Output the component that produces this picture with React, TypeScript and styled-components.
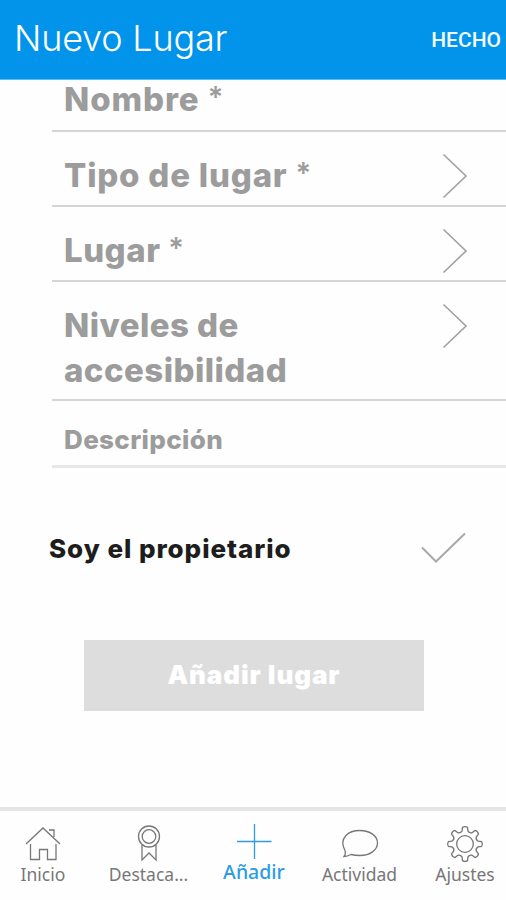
import React from "react";
import styled, { createGlobalStyle } from "styled-components";

const GlobalStyle = createGlobalStyle`
  * { box-sizing: border-box; }
  body { margin: 0; background: #fefefe; font-family: Inter, "Liberation Sans", sans-serif; }
`;

const Screen = styled.div`
  width: 506px;
  height: 900px;
  overflow: hidden;
  display: flex;
  flex-direction: column;
  background: #fefefe;
`;

const Header = styled.header`
  height: 80px;
  flex: none;
  display: flex;
  align-items: center;
  justify-content: space-between;
  padding: 0 5px 4px 14px;
  background: #0294eb;
  border-bottom: 1px solid #5bbaf2;
  color: #fff;
`;

const Title = styled.h1`
  margin: 0;
  font: 350 36px/44px Inter, sans-serif;
  letter-spacing: -0.2px;
`;

const Done = styled.button`
  border: 0;
  padding: 5px 0 0;
  background: none;
  color: #f3faff;
  font: 500 21px/26px Roboto, sans-serif;
`;

const Form = styled.main`
  flex: 1;
  display: flex;
  flex-direction: column;
`;

const Row = styled.div<{ $height: number; $top: number; $soft?: boolean }>`
  height: ${(p) => p.$height}px;
  flex: none;
  margin-left: 52px;
  padding: ${(p) => p.$top}px 38px 0 12px;
  display: flex;
  align-items: flex-start;
  justify-content: space-between;
  border-bottom: ${(p) => (p.$soft ? "3px solid #e7e7e7" : "2px solid #d5d5d5")};
`;

const Label = styled.span<{ $small?: boolean; $spacing: number; $lift?: number }>`
  width: 270px;
  margin-top: ${(p) => -(p.$lift ?? 0)}px;
  white-space: nowrap;
  color: #9c9c9c;
  font-weight: 800;
  font-size: ${(p) => (p.$small ? 26 : 33)}px;
  line-height: 45px;
  letter-spacing: ${(p) => p.$spacing}px;
`;

const Star = styled.span`
  font-weight: 600;
  font-size: 29px;
  line-height: 1;
  vertical-align: 4px;
`;

const Chevron = styled.svg`
  width: 26px;
  height: 46px;
  flex: none;
  fill: none;
  stroke: #a0a0a0;
  stroke-width: 1.6;
`;

const OwnerRow = styled.div`
  height: 50px;
  margin-top: 56px;
  padding: 0 38px 0 49px;
  display: flex;
  align-items: center;
  justify-content: space-between;
`;

const OwnerLabel = styled.span`
  color: #1d1d1d;
  font-weight: 800;
  font-size: 26px;
  line-height: 34px;
  white-space: nowrap;
  letter-spacing: 0.95px;
`;

const Check = styled.svg`
  width: 48px;
  height: 36px;
  fill: none;
  stroke: #a9a9a9;
  stroke-width: 2;
`;

const Submit = styled.button`
  width: 340px;
  height: 71px;
  margin: 66px 0 0 84px;
  padding: 0 0 1px;
  border: 0;
  background: #ddd;
  color: #fff;
  font: 900 26px/34px Inter, sans-serif;
  letter-spacing: 0.9px;
`;

const TabBar = styled.nav`
  height: 93px;
  flex: none;
  display: grid;
  grid-template-columns: 86px 125px 86px 125px 86px;
  border-top: 4px solid #e5e5e5;
`;

const Tab = styled.a<{ $active?: boolean }>`
  display: flex;
  flex-direction: column;
  align-items: center;
  padding-top: ${(p) => (p.$active ? 12 : 14)}px;
  color: ${(p) => (p.$active ? "#2c9ce4" : "#777")};
  font: ${(p) => (p.$active ? 500 : 400)} ${(p) => (p.$active ? 19.5 : 17.5)}px/24px "Noto Sans", sans-serif;
  white-space: nowrap;
`;

const Icon = styled.svg`
  width: 40px;
  height: 40px;
  margin-bottom: -3px;
  flex: none;
  fill: none;
  stroke: currentColor;
  stroke-width: 1.3;
`;

const Arrow = () => (
  <Chevron viewBox="0 0 26 46">
    <path d="M1.5 1.5 24 23 1.5 44.5" />
  </Chevron>
);

const CENTER_X = 20;
const CENTER_Y = 19;
const point = (r: number, a: number) =>
  `${(CENTER_X + r * Math.sin(a)).toFixed(2)} ${(CENTER_Y - r * Math.cos(a)).toFixed(2)}`;
const gearPath =
  Array.from({ length: 8 }, (_, i) => {
    const a = (i * Math.PI) / 4;
    return `${i ? "L" : "M"}${point(13.4, a - 0.22)}L${point(16.8, a - 0.15)}Q${point(18.2, a)} ${point(16.8, a + 0.15)}L${point(13.4, a + 0.22)}Q${point(11.4, a + Math.PI / 8)} ${point(13.4, a + Math.PI / 4 - 0.22)}`;
  }).join("") + "Z";

export default function App() {
  return (
    <>
      <GlobalStyle />
      <Screen>
        <Header>
          <Title>Nuevo Lugar</Title>
          <Done>HECHO</Done>
        </Header>
        <Form>
          <Row $height={52} $top={0}>
            <Label $spacing={0.9} $lift={3}>Nombre <Star>*</Star></Label>
          </Row>
          <Row $height={75} $top={21}>
            <Label $spacing={0.8}>Tipo de lugar <Star>*</Star></Label>
            <Arrow />
          </Row>
          <Row $height={75} $top={21}>
            <Label $spacing={0.5}>Lugar <Star>*</Star></Label>
            <Arrow />
          </Row>
          <Row $height={119} $top={21}>
            <Label $spacing={0.45}>Niveles de<br />accesibilidad</Label>
            <Arrow />
          </Row>
          <Row $height={67} $top={17} $soft>
            <Label $small $spacing={0.35} $lift={1}>Descripción</Label>
          </Row>
          <OwnerRow>
            <OwnerLabel>Soy el propietario</OwnerLabel>
            <Check viewBox="0 0 48 36">
              <path d="M2 16.5 16 30.5 45 2.5" />
            </Check>
          </OwnerRow>
          <Submit>Añadir lugar</Submit>
        </Form>
        <TabBar>
          <Tab>
            <Icon viewBox="0 0 40 40">
              <path d="M3 19 20 3 37 19M7.500 19V34.500H16.500V24.500H24.500V34.500H33V19M26 5H31V12" />
            </Icon>
            Inicio
          </Tab>
          <Tab>
            <Icon viewBox="0 0 40 40">
              <circle cx="20" cy="11.5" r="10.5" />
              <circle cx="20" cy="11.5" r="6.8" />
              <path d="M13 20V35L20 28 27 35V20" />
            </Icon>
            Destaca...
          </Tab>
          <Tab $active>
            <Icon viewBox="0 0 40 40">
              <path d="M20.5 1V36M3 18.5H37.500" />
            </Icon>
            Añadir
          </Tab>
          <Tab>
            <Icon viewBox="0 0 40 40">
              <path d="M4 31.500C6 29 5.500 26.500 4.500 24.500C-1 13 8 5.500 20 5.500C30 5.500 37.500 11 37.500 18C37.500 25 30 30.500 20 30.500C16 30.500 13 30 11 29.500C9 30.500 7 31.500 4 31.500Z" />
            </Icon>
            Actividad
          </Tab>
          <Tab>
            <Icon viewBox="0 0 40 40">
              <path d={gearPath} />
              <circle cx="20" cy="19" r="8.3" />
            </Icon>
            Ajustes
          </Tab>
        </TabBar>
      </Screen>
    </>
  );
}
